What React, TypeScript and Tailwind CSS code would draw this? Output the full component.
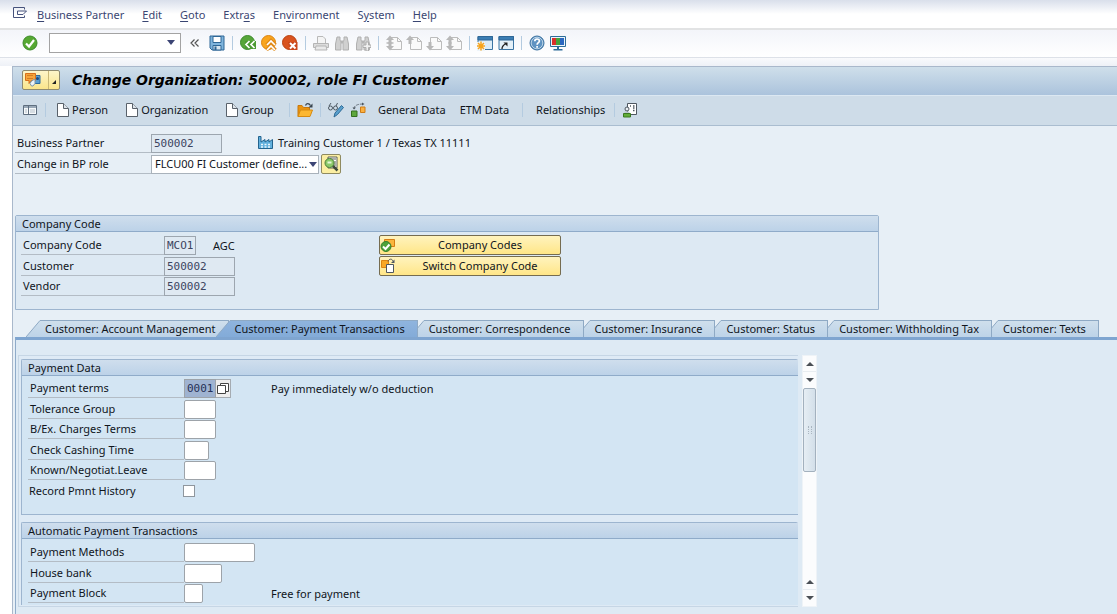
import React from "react";

const menuItems = [
  { before: "", key: "B", after: "usiness Partner" },
  { before: "", key: "E", after: "dit" },
  { before: "", key: "G", after: "oto" },
  { before: "Extr", key: "a", after: "s" },
  { before: "En", key: "v", after: "ironment" },
  { before: "S", key: "y", after: "stem" },
  { before: "", key: "H", after: "elp" },
];

const tabs = [
  "Customer: Account Management",
  "Customer: Payment Transactions",
  "Customer: Correspondence",
  "Customer: Insurance",
  "Customer: Status",
  "Customer: Withholding Tax",
  "Customer: Texts",
];

interface IconProps {
  children: React.ReactNode;
}
const Icon = ({ children }: IconProps) => (
  <svg className="size-4 shrink-0" viewBox="0 0 16 16" fill="none" aria-hidden="true">
    {children}
  </svg>
);

const MenuIcon = () => (
  <Icon>
    <path d="M12.500 3.500v-2h-11v10h11v-2" stroke="#46527c" />
    <path d="M5.500 8.500v-3.500h9L11 8.500z" fill="#fff" stroke="#46527c" />
  </Icon>
);

const EnterIcon = () => (
  <Icon>
    <circle cx="8" cy="8" r="7" fill="#56a832" stroke="#3d8a2a" />
    <path d="M4 8.500l3 3 5-6.500" stroke="#fff" strokeWidth="2.200" />
  </Icon>
);

const SaveIcon = () => (
  <Icon>
    <path d="M1 1h14v14H3l-2-2z" fill="#7fb4dc" stroke="#2f6796" />
    <path d="M4 1.500h8v6H4z" fill="#fff" stroke="#2f6796" />
    <path d="M4 10.500h8V15H4z" fill="#d8e6f0" stroke="#2f6796" />
    <path d="M5.500 11.500h2V15h-2z" fill="#2f6796" />
  </Icon>
);

const BackIcon = () => (
  <Icon>
    <circle cx="7.500" cy="7.500" r="7" fill="#57a639" stroke="#3b8a2c" />
    <path d="M5 6h11v8H5z" fill="#4c9a33" />
    <path d="M9.500 6L6 9.500 9.500 13M14.500 6L11 9.500l3.500 3.500" stroke="#fff" strokeWidth="1.700" />
  </Icon>
);

const ExitIcon = () => (
  <Icon>
    <circle cx="7.500" cy="7.500" r="7" fill="#f9a51d" stroke="#dc8412" />
    <path d="M5.500 10L10 5.500l4.500 4.500M5.500 15l4.500-4.500 4.500 4.500" stroke="#e08a17" strokeWidth="3.500" />
    <path d="M6 10l4-4 4 4M6 15l4-4 4 4" stroke="#fff" strokeWidth="1.700" />
  </Icon>
);

const CancelIcon = () => (
  <Icon>
    <circle cx="7.500" cy="7.500" r="7" fill="#d9531e" stroke="#b9400f" />
    <path d="M6 7h9.500v8H8z" fill="#c9461a" />
    <path d="M8 8l5.500 5.500M13.500 8L8 13.500" stroke="#fff" strokeWidth="2" />
  </Icon>
);

const PrintIcon = () => (
  <Icon>
    <path d="M4.500 8V1.500H10L12.500 4v4" fill="#f4f4f4" stroke="#b9b9b9" />
    <path d="M.500 8.500h15v4H.500z" fill="#dcdcdc" stroke="#b5b5b5" />
    <path d="M3 11h10l1 4H2z" fill="#e9e9e9" stroke="#b5b5b5" />
  </Icon>
);

const FindIcon = ({ next }: { next?: boolean }) => (
  <Icon>
    <path d="M3 2h3v3l1 2v8H1.500V9z" fill="#d0d0d0" stroke="#b0b0b0" />
    <path d="M10 2h3l1.500 7v6H9V7l1-2z" fill="#d0d0d0" stroke="#b0b0b0" />
    <path d="M7 5.500h2v3H7z" fill="#b5b5b5" />
    {next && <path d="M11 7v3H8v2.500h3V16h2.500v-3.500H16V10h-2.500V7z" fill="#f0f0f0" stroke="#adadad" />}
  </Icon>
);

interface PageIconProps {
  up?: boolean;
  down?: boolean;
  dbl?: boolean;
}
const PageIcon = ({ up, down, dbl }: PageIconProps) => (
  <Icon>
    <path d="M4.500 2.500h7l4 4v8h-11z" fill="#fafafa" stroke="#bcbcbc" />
    <path d="M11.500 2.500v4h4" stroke="#bcbcbc" />
    {up && <path d="M4 .500L8 5H5.500v4h-3V5H0z" fill="#b8b8b8" />}
    {down && <path d="M4 15.500L8 11H5.500V7h-3v4H0z" fill="#b8b8b8" />}
    {dbl && <path d="M.500 8h7" stroke="#b8b8b8" strokeWidth="1.500" />}
  </Icon>
);

const SessionIcon = () => (
  <Icon>
    <path d="M1 1.500h14.500v13H1z" fill="#dcecf7" stroke="#3b74a3" />
    <path d="M1 1.500h14.500v3.500H1z" fill="#3b7db3" stroke="#2f6796" />
    <path d="M0 7h8v9H0z" fill="#eef5fa" />
    <path d="M4 6.500v9M0 11h8M1 8l6 6M7 8l-6 6" stroke="#f7a41c" strokeWidth="1.500" />
  </Icon>
);

const ShortcutIcon = () => (
  <Icon>
    <path d="M1 1.500h14.500v13H1z" fill="#e4f0f8" stroke="#3b74a3" />
    <path d="M1 1.500h14.500v3.500H1z" fill="#3b7db3" stroke="#2f6796" />
    <path d="M4 14c0-3 1.500-4 3.500-5" stroke="#222" strokeWidth="1.300" />
    <path d="M5.500 7.500H9.500v4z" fill="#222" />
  </Icon>
);

const HelpIcon = () => (
  <Icon>
    <circle cx="8" cy="8" r="7" fill="#5f93c2" stroke="#39709f" />
    <circle cx="8" cy="8" r="5.800" stroke="#b9d2e6" />
    <path d="M5.800 6.300c0-3 4.600-3 4.600-.3 0 1.600-2.300 1.600-2.300 3.700M8.100 11v1.700" stroke="#fff" strokeWidth="1.700" />
  </Icon>
);

const LayoutIcon = () => (
  <Icon>
    <path d="M.500 1.500h15v10H.500z" fill="#eaf4fa" stroke="#2c6d99" />
    <path d="M2 3h4v7H2z" fill="#d9302a" />
    <path d="M6 3h4v7H6z" fill="#46a33a" />
    <path d="M10 3h4v7h-4z" fill="#2a67c0" />
    <path d="M7 12h2v2h3.500v1.500h-9V14H7z" fill="#2c6d99" />
  </Icon>
);

const ServicesIcon = () => (
  <Icon>
    <path d="M9.500 3.500h5.500v8H9.500z" fill="#5c9fd0" stroke="#2f6b9b" />
    <path d="M.500 1.500h10v7H6l-2 3v-3H.500z" fill="#f6a53a" stroke="#d9701a" />
    <path d="M2.500 3.500h1m1 0h1m1 0h1m-5 3h1m1 0h1m1 0h1" stroke="#b0560c" />
    <path d="M6.500 9l3.500-2v4.500L8 14H6.500L5 11.500z" fill="#eef4f8" stroke="#7d96a8" />
    <circle cx="12.500" cy="6.500" r="1.500" fill="#1c4b80" />
  </Icon>
);

const LocatorIcon = () => (
  <Icon>
    <path d="M1.500 3.500h13v9h-13z" fill="#f6f9fb" stroke="#5f6f80" />
    <path d="M2 4h12v2H2z" fill="#9aa9b8" />
    <path d="M6.500 4v8.500" stroke="#5f6f80" />
    <path d="M3 8h2M3 10h2M8 8h5M8 10h5" stroke="#b5c0ca" />
  </Icon>
);

const NewDocIcon = () => (
  <svg className="h-4 w-3 shrink-0" viewBox="0 0 12 16" fill="none" aria-hidden="true">
    <path d="M.500 1.500h6l5 5v8H.500z" fill="#fff" stroke="#59616a" />
    <path d="M6.500 1.500v5h5" fill="#dce3ea" stroke="#59616a" />
  </svg>
);

const OpenIcon = () => (
  <Icon>
    <path d="M1 14.500v-11h4l1.500 2h6V8" fill="#e9930f" stroke="#c9780c" />
    <path d="M1 14.500L3.500 8h12L13 14.500z" fill="#fcb731" stroke="#d68a10" />
    <path d="M8.500 3.500c1-2.500 3.500-2.500 5 0" stroke="#39444f" strokeWidth="1.300" />
    <path d="M15.500 1.500V5.500h-4z" fill="#39444f" />
  </Icon>
);

const DisplayChangeIcon = () => (
  <Icon>
    <circle cx="2.500" cy="6" r="2" stroke="#4d5963" />
    <circle cx="7.500" cy="6" r="2" stroke="#4d5963" />
    <path d="M1 4l2-3M8 4l1.500-3" stroke="#4d5963" />
    <path d="M13.500 3.500l2 2-6 7-3.500 2.500 1-4z" fill="#5aa0cd" stroke="#2d6a96" />
  </Icon>
);

const RelationIcon = () => (
  <Icon>
    <path d="M1.500 9h5.500v5.500H1.500z" fill="#5ea83d" stroke="#347021" />
    <path d="M10.500 5H15v5.500h-4.500z" fill="#fbb040" stroke="#cf7d17" />
    <path d="M4 6.500c0-3 4-4.500 8.500-4.500" stroke="#6b757f" strokeDasharray="3 1" />
    <path d="M2.500 5.500h3.500L4 7.500z" fill="#4b555f" />
    <path d="M12 .500v3l2.500-1.500z" fill="#4b555f" />
  </Icon>
);

const PersonListIcon = () => (
  <Icon>
    <path d="M5.500 1.500h9v11h-9z" fill="#fff" stroke="#4e5760" />
    <path d="M8 4h1M11 4h1.500M11 6h1.500M11 8.500h1.500" stroke="#4e5760" strokeWidth="1.300" />
    <circle cx="5" cy="7" r="2" fill="#e8eef2" stroke="#4e5760" />
    <path d="M2.500 9.500h5v2.500h-5z" fill="#bcc8d0" />
    <path d="M1.500 11.500H8.500V15H1.500z" fill="#62ad38" stroke="#3a7a20" />
  </Icon>
);

const FactoryIcon = () => (
  <Icon>
    <path d="M1.500 13.500V1.500h2.500V7l4-2.500V7l4-2.500V7l3.500-2.500v9z" fill="#62b0dd" stroke="#22638e" />
    <path d="M4 9.500h2M7.500 9.500h2M11 9.500h2M4 12h2M7.500 12h2M11 12h2" stroke="#eaf5fb" strokeWidth="1.500" />
  </Icon>
);

const DetailIcon = () => (
  <Icon>
    <path d="M5 1h9v11H5z" fill="#fff" stroke="#5c6055" />
    <path d="M7 3h6M12 5v5" stroke="#5c6055" />
    <path d="M9.500 9.500l5 5" stroke="#3f4a3c" strokeWidth="2.500" />
    <circle cx="6.500" cy="7" r="4.500" fill="#8bc96a" stroke="#4d7f39" />
    <path d="M4.500 6.500h4" stroke="#e6f6da" strokeWidth="2" />
  </Icon>
);

const CompanyCodesIcon = () => (
  <Icon>
    <path d="M4.500 2.500h10v7h-10z" fill="#f9b53c" stroke="#d57d14" />
    <circle cx="6" cy="9.500" r="5" fill="#4da23a" stroke="#33802b" />
    <path d="M3 9.500l2.500 2.500L9.500 7.500" stroke="#fff" strokeWidth="2" />
  </Icon>
);

const SwitchCodeIcon = () => (
  <Icon>
    <path d="M1.500 2.500h7v7h-7z" fill="#f9a825" stroke="#dd8413" />
    <path d="M6.500 6.500h7v8h-7z" fill="#fff" stroke="#4e5760" />
    <path d="M8 3.500c1-3 4-3 5-.5" stroke="#4e5760" />
    <path d="M14.500 1.500V5h-3.500z" fill="#4e5760" />
  </Icon>
);

const Separator = () => <span className="mx-[7px] h-3.5 w-px shrink-0 bg-[#b4cbe0]" />;

interface ToolProps {
  label: string;
  children: React.ReactNode;
}
const Tool = ({ label, children }: ToolProps) => (
  <button type="button" aria-label={label} className="shrink-0">
    {children}
  </button>
);

const Arrow = ({ up }: { up?: boolean }) => (
  <svg className="h-1 w-2" viewBox="0 0 8 4" aria-hidden="true">
    <path d={up ? "M0 4L4 0l4 4z" : "M0 0l4 4 4-4z"} fill="#4a4f55" />
  </svg>
);

const MenuBar = () => (
  <nav className="flex h-[30px] items-center border-b-2 border-[#e2e3e4] bg-linear-to-b from-[#d9dfeb] via-white via-50% to-white pl-3 text-[#3a4672]">
    <Tool label="Menu">
      <MenuIcon />
    </Tool>
    <ul className="ml-[9px] flex gap-[18px] pt-px">
      {menuItems.map((item) => (
        <li key={item.key}>
          <button type="button">
            {item.before}
            <span className="underline underline-offset-2">{item.key}</span>
            {item.after}
          </button>
        </li>
      ))}
    </ul>
  </nav>
);

const SystemToolbar = () => (
  <div className="flex h-7 items-center border-b border-[#dde1e8] bg-linear-to-b from-[#f3f5fa] to-white pb-0.5 pl-[22px]">
    <Tool label="Enter">
      <EnterIcon />
    </Tool>
    <div className="ml-[11px] flex h-5 w-[132px] items-center border border-[#a3a3a3] bg-white">
      <input aria-label="Command" className="min-w-0 flex-1 px-1 outline-none" />
      <button type="button" aria-label="Command history" className="px-[5px]">
        <svg className="h-[5px] w-2" viewBox="0 0 8 5" aria-hidden="true">
          <path d="M0 0h8L4 5z" fill="#3b4474" />
        </svg>
      </button>
    </div>
    <button type="button" aria-label="Hide command field" className="mx-[9px]">
      <svg className="size-2.5" viewBox="0 0 10 10" fill="none" aria-hidden="true">
        <path d="M4.500 1.500L1 5l3.500 3.500M8.500 1.500L5 5l3.500 3.500" stroke="#555" strokeWidth="1.200" />
      </svg>
    </button>
    <Tool label="Save"><SaveIcon /></Tool>
    <Separator />
    <div className="flex gap-[5px]">
      <Tool label="Back"><BackIcon /></Tool>
      <Tool label="Exit"><ExitIcon /></Tool>
      <Tool label="Cancel"><CancelIcon /></Tool>
    </div>
    <Separator />
    <div className="flex gap-[5px]">
      <Tool label="Print"><PrintIcon /></Tool>
      <Tool label="Find"><FindIcon /></Tool>
      <Tool label="Find next"><FindIcon next /></Tool>
    </div>
    <Separator />
    <div className="flex gap-1">
      <Tool label="First page"><PageIcon up down dbl /></Tool>
      <Tool label="Previous page"><PageIcon up /></Tool>
      <Tool label="Next page"><PageIcon down /></Tool>
      <Tool label="Last page"><PageIcon up down /></Tool>
    </div>
    <Separator />
    <div className="flex gap-[5px]">
      <Tool label="New session"><SessionIcon /></Tool>
      <Tool label="Create shortcut"><ShortcutIcon /></Tool>
    </div>
    <Separator />
    <div className="flex gap-[5px]">
      <Tool label="Help"><HelpIcon /></Tool>
      <Tool label="Customize layout"><LayoutIcon /></Tool>
    </div>
  </div>
);

const TitleBar = () => (
  <header className="flex h-7 items-center gap-3 bg-linear-to-b from-[#cfdfea] to-[#abc3dc] pb-0.5 pl-[9px]">
    <div className="flex h-5 items-center rounded-xs border border-[#8f8a70] bg-linear-to-b from-[#fdf5c9] to-[#fbe58a]">
      <button type="button" aria-label="Services for object" className="pr-[7px] pl-0.5">
        <ServicesIcon />
      </button>
      <button type="button" aria-label="More services" className="flex h-full items-end border-l border-[#c9b877] px-0.5 pb-1">
        <svg className="size-1.5" viewBox="0 0 6 6" aria-hidden="true">
          <path d="M5 1v4H1z" fill="#222" />
        </svg>
      </button>
    </div>
    <h1 className="font-['DejaVu_Sans',sans-serif] text-sm font-bold text-black italic">Change Organization: 500002, role FI Customer</h1>
  </header>
);

const AppToolbar = () => (
  <div className="flex h-[31px] items-center border-t border-b border-t-[#dce8f2] border-b-[#aabdd0] bg-[#cedce8] pb-0.5 pl-[9px]">
    <Tool label="Locator"><LocatorIcon /></Tool>
    <Separator />
    <div className="ml-1 flex gap-[18px]">
      {["Person", "Organization", "Group"].map((name) => (
        <button key={name} type="button" className="flex items-center gap-[3px]">
          <NewDocIcon />
          {name}
        </button>
      ))}
    </div>
    <span className="w-2" />
    <Separator />
    <Tool label="Open"><OpenIcon /></Tool>
    <Separator />
    <div className="flex gap-1.5">
      <Tool label="Display/Change"><DisplayChangeIcon /></Tool>
      <Tool label="Relationship overview"><RelationIcon /></Tool>
    </div>
    <button type="button" className="ml-3">General Data</button>
    <button type="button" className="mx-3.5 mr-1.5">ETM Data</button>
    <Separator />
    <button type="button" className="mr-0.5 ml-1.5">Relationships</button>
    <Separator />
    <Tool label="Contact persons"><PersonListIcon /></Tool>
  </div>
);

interface FieldRowProps {
  id: string;
  label: string;
  labelWidth: string;
  children: React.ReactNode;
}
const FieldRow = ({ id, label, labelWidth, children }: FieldRowProps) => (
  <div className="flex h-5 items-end even:h-[21px]">
    <label htmlFor={id} className={`${labelWidth} flex h-full shrink-0 items-center border-b border-[#b3bcc5] pt-px pl-0.5`}>
      {label}
    </label>
    {children}
  </div>
);

interface ReadOnlyProps {
  id: string;
  value: string;
  width: string;
}
const ReadOnlyInput = ({ id, value, width }: ReadOnlyProps) => (
  <input
    id={id}
    readOnly
    value={value}
    className={`${width} h-[19px] border border-[#9da6af] bg-[#dfe9f2] px-0.5 pb-px font-['DejaVu_Sans_Mono',monospace] text-[11px] text-[#3c4460] outline-none`}
  />
);

const TextInput = ({ id, width }: { id: string; width: string }) => (
  <input id={id} className={`${width} h-[19px] rounded-xs border border-[#9da3a9] bg-white px-0.5 outline-none`} />
);

interface GroupBoxProps {
  title: string;
  className: string;
  children: React.ReactNode;
}
const GroupBox = ({ title, className, children }: GroupBoxProps) => (
  <section className={`${className} rounded-t-xs border-[#9db5cf]`}>
    <h2 className="flex h-4 items-center border-b border-[#8fabc9] bg-linear-to-b from-[#cfdeed] to-[#bcd2e8] pl-1.5">{title}</h2>
    {children}
  </section>
);

const yellowButton =
  "flex h-5 w-[182px] items-center rounded-xs border border-[#756c50] bg-linear-to-b from-[#fff3bd] to-[#ffe687] pr-3";

const PartnerHeader = () => (
  <div className="pt-[7px] pl-0.5">
    <FieldRow id="partner" label="Business Partner" labelWidth="w-[136px]">
      <ReadOnlyInput id="partner" value="500002" width="w-[71px]" />
      <span className="ml-[35px] flex h-full items-center gap-[5px]">
        <FactoryIcon />
        Training Customer 1 / Texas TX 11111
      </span>
    </FieldRow>
    <FieldRow id="role" label="Change in BP role" labelWidth="w-[136px]">
      <span className="relative">
        <select id="role" className="block h-[19px] w-[168px] appearance-none border border-[#a9b2bb] bg-white pb-0.5 pl-[3px] outline-none">
          <option>FLCU00 FI Customer (define...</option>
        </select>
        <svg className="pointer-events-none absolute top-[7px] right-0.5 h-[5px] w-2" viewBox="0 0 8 5" aria-hidden="true">
          <path d="M0 0h8L4 5z" fill="#3b4474" />
        </svg>
      </span>
      <button type="button" aria-label="Role details" className="ml-0.5 h-5 rounded-xs border border-[#8f8a60] bg-[#fbeea2] px-px">
        <DetailIcon />
      </button>
    </FieldRow>
  </div>
);

const CompanyCodeBox = () => (
  <GroupBox title="Company Code" className="mt-[41px] ml-0.5 w-[864px] border bg-[#dde9f3] pb-[13px]">
    <div className="flex pt-[3px] pl-[5px]">
      <div className="w-[358px]">
        <FieldRow id="code" label="Company Code" labelWidth="w-[143px]">
          <ReadOnlyInput id="code" value="MCO1" width="w-8" />
          <span className="flex h-full items-center pt-px pl-[17px]">AGC</span>
        </FieldRow>
        <FieldRow id="customer" label="Customer" labelWidth="w-[143px]">
          <ReadOnlyInput id="customer" value="500002" width="w-[71px]" />
        </FieldRow>
        <FieldRow id="vendor" label="Vendor" labelWidth="w-[143px]">
          <ReadOnlyInput id="vendor" value="500002" width="w-[71px]" />
        </FieldRow>
      </div>
      <div className="flex flex-col gap-px">
        <button type="button" className={yellowButton}>
          <CompanyCodesIcon />
          <span className="flex-1 pl-4">Company Codes</span>
        </button>
        <button type="button" className={yellowButton}>
          <SwitchCodeIcon />
          <span className="flex-1 pl-4">Switch Company Code</span>
        </button>
      </div>
    </div>
  </GroupBox>
);

interface TabProps {
  label: string;
  active: boolean;
  first: boolean;
}
const Tab = ({ label, active, first }: TabProps) => {
  const full = active || first;
  return (
    <button type="button" role="tab" aria-selected={active} className={`flex h-[17px] ${active ? "relative -ml-[13px]" : ""}`}>
      <svg
        className={`h-[17px] shrink-0 ${full ? "w-4" : "w-2"}`}
        viewBox={full ? "0 0 16 17" : "8 0 8 17"}
        fill="none"
        aria-hidden="true"
      >
        <defs>
          <linearGradient id={active ? "slantOn" : "slantOff"} x1="0" y1="0" x2="0" y2="17" gradientUnits="userSpaceOnUse">
            <stop stopColor={active ? "#8fb4de" : "#cfdfec"} />
            <stop offset="1" stopColor={active ? "#83abd8" : "#bdd3e8"} />
          </linearGradient>
        </defs>
        <path d="M0 17L14 .500H16V17z" fill={active ? "url(#slantOn)" : "url(#slantOff)"} />
        <path d="M0 17L14 .500H16" stroke="#8ea9c4" />
      </svg>
      <span
        className={`flex h-full items-center border-t border-r border-[#8ea9c4] bg-linear-to-b pr-3 pl-[3px] whitespace-nowrap ${
          active ? "from-[#8fb4de] to-[#83abd8]" : "from-[#cfdfec] to-[#bdd3e8]"
        }`}
      >
        {label}
      </span>
    </button>
  );
};

const ScrollBar = () => (
  <div className="flex w-[15px] flex-col border border-[#eef3f7] bg-[#fbfcfd]">
    <button type="button" aria-label="Line up" className="flex h-4 items-center justify-center border-b border-[#e8edf1]">
      <Arrow up />
    </button>
    <button type="button" aria-label="Line down" className="flex h-4 items-center justify-center">
      <Arrow />
    </button>
    <div className="flex h-[84px] items-center justify-center gap-0.5 rounded-xs border border-[#a3b1be] bg-linear-to-r from-[#e6eef4] to-[#d3dfe9]">
      <span className="h-2 border-l border-dotted border-[#a9b5c0]" />
      <span className="h-2 border-l border-dotted border-[#a9b5c0]" />
    </div>
    <span className="flex-1" />
    <button type="button" aria-label="Page up" className="flex h-4 items-center justify-center border-b border-[#e8edf1]">
      <Arrow up />
    </button>
    <button type="button" aria-label="Page down" className="flex h-4 items-center justify-center">
      <Arrow />
    </button>
  </div>
);

const PaymentPanel = () => (
  <div className="flex w-[799px] gap-1">
    <div className="flex-1 border-y border-l border-[#c6d6e5] bg-[#deeaf5] pt-[3px] pb-px pl-0.5">
      <GroupBox title="Payment Data" className="border border-r-0 bg-[#d3e5f3] pb-[13px]">
        <div className="pt-0.5 pl-1.5">
          <FieldRow id="terms" label="Payment terms" labelWidth="w-[156px]">
            <input
              id="terms"
              defaultValue="0001"
              className="h-[19px] w-8 border border-[#9da3a9] bg-[#9fb3d1] px-0.5 pb-px font-['DejaVu_Sans_Mono',monospace] text-[11px] text-[#263056] outline-none"
            />
            <button type="button" aria-label="Value help" className="h-[19px] border border-l-0 border-[#a5abb1] bg-[#ededed] px-px">
              <svg className="h-4 w-3" viewBox="0 0 12 16" fill="none" aria-hidden="true">
                <path d="M3.500 2.500h8v8h-8z" fill="#fff" stroke="#444" />
                <path d="M.500 4.500h8v8h-8z" fill="#fff" stroke="#444" />
              </svg>
            </button>
            <span className="ml-10 flex h-full items-center pt-px">Pay immediately w/o deduction</span>
          </FieldRow>
          <FieldRow id="tolerance" label="Tolerance Group" labelWidth="w-[156px]">
            <TextInput id="tolerance" width="w-8" />
          </FieldRow>
          <FieldRow id="charges" label="B/Ex. Charges Terms" labelWidth="w-[156px]">
            <TextInput id="charges" width="w-8" />
          </FieldRow>
          <FieldRow id="cashing" label="Check Cashing Time" labelWidth="w-[156px]">
            <TextInput id="cashing" width="w-[25px]" />
          </FieldRow>
          <FieldRow id="leave" label="Known/Negotiat.Leave" labelWidth="w-[156px]">
            <TextInput id="leave" width="w-8" />
          </FieldRow>
          <div className="flex h-[21px] items-center">
            <label htmlFor="history" className="w-[155px] pl-px">Record Pmnt History</label>
            <input id="history" type="checkbox" className="size-3 appearance-none border border-[#8f969d] bg-white" />
          </div>
        </div>
      </GroupBox>
      <GroupBox title="Automatic Payment Transactions" className="mt-[7px] border-t border-l bg-[#d3e5f3] pb-0.5">
        <div className="pt-[3px] pl-1.5">
          <FieldRow id="methods" label="Payment Methods" labelWidth="w-[156px]">
            <TextInput id="methods" width="w-[71px]" />
          </FieldRow>
          <FieldRow id="bank" label="House bank" labelWidth="w-[156px]">
            <TextInput id="bank" width="w-[38px]" />
          </FieldRow>
          <FieldRow id="block" label="Payment Block" labelWidth="w-[156px]">
            <TextInput id="block" width="w-[19px]" />
            <span className="ml-[68px] flex h-full items-center pt-px">Free for payment</span>
          </FieldRow>
        </div>
      </GroupBox>
    </div>
    <ScrollBar />
  </div>
);

const App = () => {
  return (
    <div className="flex min-h-screen flex-col bg-white font-['Noto_Sans','DejaVu_Sans_Condensed',sans-serif] text-[11px] leading-4 text-[#10151c]">
      <MenuBar />
      <SystemToolbar />
      <div className="h-2 bg-linear-to-b from-[#f9fafc] to-[#eef1f7]" />
      <main className="ml-3 flex flex-1 flex-col border-t border-l border-[#a9b8cb] bg-[#e7eff6]">
        <TitleBar />
        <AppToolbar />
        <PartnerHeader />
        <CompanyCodeBox />
        <div role="tablist" className="mt-2.5 ml-0.5 flex pl-[11px]">
          {tabs.map((label, index) => (
            <Tab key={label} label={label} active={index === 1} first={index === 0} />
          ))}
        </div>
        <div className="ml-0.5 flex-1 border-t-[3px] border-l border-t-[#7fa5d0] border-l-[#8fabc9] bg-[#deeaf4] pt-[15px] pb-[5px] pl-0.5">
          <PaymentPanel />
        </div>
      </main>
    </div>
  );
};

export default App;
